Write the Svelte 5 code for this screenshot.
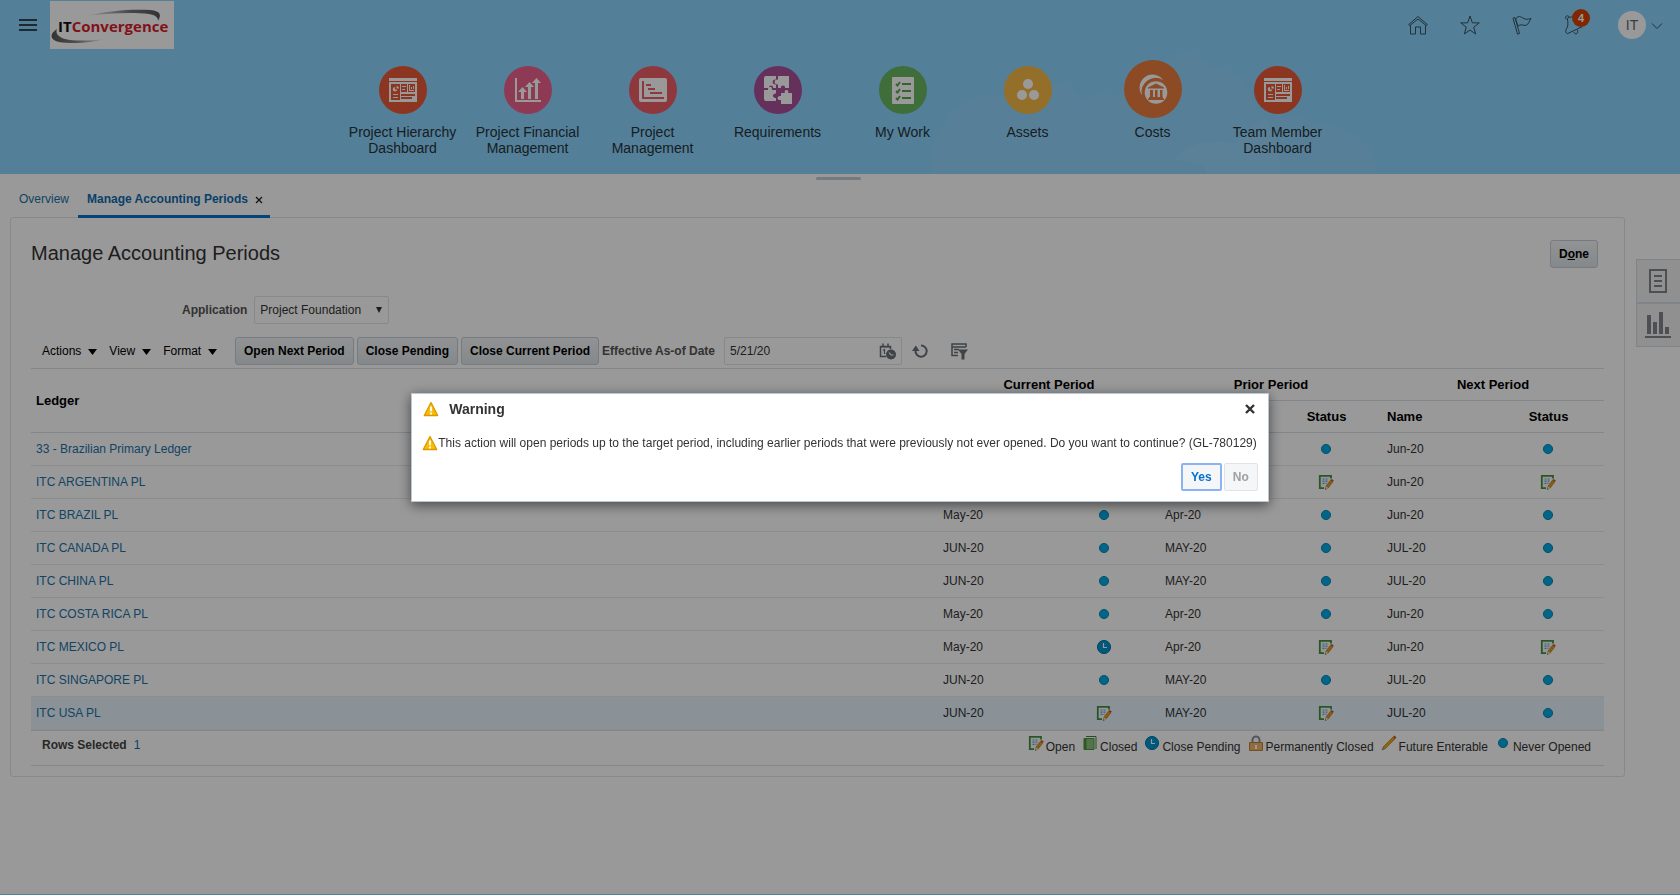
<script>
  const springboard = [
    { label: 'Project Hierarchy Dashboard', color: '#e95a39', icon: 'dashboard' },
    { label: 'Project Financial Management', color: '#ed618e', icon: 'growth' },
    { label: 'Project Management', color: '#ed5d66', icon: 'gantt' },
    { label: 'Requirements', color: '#aa509b', icon: 'puzzle' },
    { label: 'My Work', color: '#69b762', icon: 'checklist' },
    { label: 'Assets', color: '#f7b946', icon: 'assets' },
    { label: 'Costs', color: '#e97d3e', icon: 'costs', active: true },
    { label: 'Team Member Dashboard', color: '#e95a39', icon: 'dashboard' }
  ];

  const ledgers = [
    { name: '33 - Brazilian Primary Ledger', periods: [['', ''], ['', 'never'], ['Jun-20', 'never']] },
    { name: 'ITC ARGENTINA PL', periods: [['', ''], ['', 'open'], ['Jun-20', 'open']] },
    { name: 'ITC BRAZIL PL', periods: [['May-20', 'never'], ['Apr-20', 'never'], ['Jun-20', 'never']] },
    { name: 'ITC CANADA PL', periods: [['JUN-20', 'never'], ['MAY-20', 'never'], ['JUL-20', 'never']] },
    { name: 'ITC CHINA PL', periods: [['JUN-20', 'never'], ['MAY-20', 'never'], ['JUL-20', 'never']] },
    { name: 'ITC COSTA RICA PL', periods: [['May-20', 'never'], ['Apr-20', 'never'], ['Jun-20', 'never']] },
    { name: 'ITC MEXICO PL', periods: [['May-20', 'pending'], ['Apr-20', 'open'], ['Jun-20', 'open']] },
    { name: 'ITC SINGAPORE PL', periods: [['JUN-20', 'never'], ['MAY-20', 'never'], ['JUL-20', 'never']] },
    { name: 'ITC USA PL', selected: true, periods: [['JUN-20', 'open'], ['MAY-20', 'open'], ['JUL-20', 'never']] }
  ];

  const legend = [
    ['open', 'Open'],
    ['closed', 'Closed'],
    ['pending', 'Close Pending'],
    ['locked', 'Permanently Closed'],
    ['future', 'Future Enterable'],
    ['never', 'Never Opened']
  ];

  let effectiveDate = $state('5/21/20');
  let dialogOpen = $state(true);
</script>

{#snippet status(kind)}
  <svg class="status" viewBox="0 0 16 16" width="16" height="16" aria-hidden="true">
    {#if kind === 'never'}
      <circle cx="8" cy="8" r="4.6" fill="#00a8e0" stroke="#087fab" stroke-width=".9" />
    {:else if kind === 'pending'}
      <circle cx="8" cy="8" r="6.6" fill="#0095cf" stroke="#0879a6" />
      <path d="M7.5 4v4.5H11" fill="none" stroke="#fff" stroke-width="1.2" />
    {:else if kind === 'open'}
      <path d="M1 1h12v10l-3 4H1z" fill="#f4f7fb" />
      <path d="M13 4.500V1.800H1.800v12.400H6" fill="none" stroke="#44913b" stroke-width="1.800" />
      <path d="M4.500 5h2m1 0h2m-5 2.200h2m1 0h2m-5 2.200h2m1 0h1" stroke="#6c9ed6" stroke-width="1.200" />
      <path d="M7.300 15.500l.8-3.400 4.600-6 2.200 1.700-4.600 6z" fill="#e59b13" stroke="#9c6b10" stroke-width=".6" />
      <path d="M12.600 6.100l1-1.200 2.200 1.600-1 1.300z" fill="#cf4740" />
      <path d="M7.200 15.700l.8-3.300 2.300 1.700z" fill="#eee" /><path d="M7.200 15.700l.3-1.500 1 .7z" fill="#555" />
    {:else if kind === 'closed'}
      <path d="M4 1.500h10V14" fill="none" stroke="#3f8239" />
      <path d="M2 3.500h10v11H2z" fill="#8dc47f" stroke="#4b9142" />
      <path d="M2 3h2.500v12H2z" fill="#4b9142" />
    {:else if kind === 'locked'}
      <path d="M4.500 8V5a3.500 3.500 0 0 1 7 0v3" fill="none" stroke="#8a9299" stroke-width="2" />
      <path d="M1.500 7.500h13v8h-13z" fill="#f1b56d" stroke="#c37f30" />
      <path d="M8 10v4" stroke="#fff" stroke-width="2" />
    {:else if kind === 'future'}
      <path d="M1 15l1.500-3.500L12 2l2 2-9.600 9.500z" fill="#e8a915" stroke="#b17710" stroke-width=".6" />
      <path d="M12 2l1.500-1.500 2 2L14 4z" fill="#d94a3e" />
      <path d="M.6 15.500l1.700-4 2.200 2.200z" fill="#999" />
    {/if}
  </svg>
{/snippet}

{#snippet tile(kind)}
  <svg viewBox="0 0 48 48" width="48" height="48" aria-hidden="true" fill="#fff">
    {#if kind === 'dashboard'}
      <path d="M10 12h28v3H10zM10 16h28v20H10z" />
      <g fill="#e95a39">
        <path d="M12 18h9v16h-9zM22 18h6v8h-6zM29 18h7v8h-7zM22 28h14v2H22zM22 31h11v2H22z" />
      </g>
      <path d="M16 21a2.300 2.300 0 1 0 2.300 2.500H16zM17.500 20v2.500H20a2.500 2.500 0 0 0-2.500-2.500zM14 28h5v1h-5zM14 31h5v1h-5zM23 20h4v1h-4zM23 23h3v1h-3zM30 19h1v5h4v1h-5zM32 21h1v2h-1zM34 20h1v3h-1z" />
    {:else if kind === 'growth'}
      <path d="M11 12h2v22h24v2H11z" />
      <path d="M17 33v-7h-3l4.500-5 4.500 5h-3v7zM24 33V21h-3l4.500-5 4.500 5h-3v12zM31 33V17h-3l4.500-5 4.500 5h-3v16z" />
    {:else if kind === 'gantt'}
      <rect x="10" y="12" width="28" height="24" rx="2" />
      <path fill="#ed5d66" d="M13 15h2v16h20v2H13zM17 18h5v2h-5zM19 22h7v2h-7zM21 26h12v2H21z" />
    {:else if kind === 'puzzle'}
      <path d="M12 10h10v3.500c-4.500-.5-4.500 5.500 0 5V22h-3c1-3.500-5-3.500-4 0h-5V12q0-2 2-2z" />
      <path d="M24 10h11v12h-4c1-3.500-5-3.500-4 0h-3v-3.500c-4.500.5-4.500-5.500 0-5z" />
      <path d="M10 24h4c-1-4.500 5-4.500 4 0h4v3.500c-4-.5-4 5 0 4.500v3H12q-2 0-2-2z" />
      <path d="M27 27h4c-2-4 5-4 3 0h4v11H27v-4c-4.500 1-4.500-5 0-4z" />
    {:else if kind === 'checklist'}
      <rect x="13" y="11" width="22" height="27" rx="1" />
      <path d="M17 18l1.500 1.500L21 16M23 18h9M17 25l1.500 1.500L21 23M23 25h9M17 32l1.500 1.500L21 30M23 32h9" fill="none" stroke="#58a551" stroke-width="2" />
    {:else if kind === 'assets'}
      <circle cx="24" cy="18" r="5" /><circle cx="18" cy="29" r="5" /><circle cx="30" cy="29" r="5" />
    {:else if kind === 'costs'}
      <path d="M13 30a12 12 0 0 1 21-15A14 14 0 0 0 13 30z" />
      <circle cx="27" cy="27.500" r="11.300" />
      <path fill="#e97d3e" d="M27 18.500l8 4v1H19v-1zM21 25h3v7h-3zM26 25h2.500v7H26zM31 25h2.500v7H31zM20 32h14v1.500h1V35H19v-1.500h1z" />
    {/if}
  </svg>
{/snippet}

{#snippet warn()}
  <svg class="warn" viewBox="0 0 16 16" width="16" height="16" aria-hidden="true">
    <path d="M8 1.500L14.700 14.500H1.300z" fill="#fbbc05" stroke="#d99a00" stroke-width="1.300" stroke-linejoin="round" />
    <path d="M8 5.500v4.800M8 11.500v2" stroke="#fff" stroke-width="1.800" />
  </svg>
{/snippet}

<div class="page">
  <header class="banner">
    <svg class="clouds" viewBox="0 0 1680 174" preserveAspectRatio="xMidYMax slice" aria-hidden="true">
      <path d="M932 174c-2-42 20-74 52-77 20-4 38 5 46 3 20-28 46-16 52 4 8-12 24-14 34-4 14-26 34-32 54-40 18-14 36-4 42 8 26 0 42 20 44 42 16 10 24 30 24 64z" />
      <path d="M1174 160c16-18 42-22 62-16 20-30 58-36 80-18 24-4 60 16 60 48H1207c0-10-14-14-33-14z" />
    </svg>
    <div class="global">
      <button class="bare menu" aria-label="Navigator">
        <svg viewBox="0 0 18 14" width="18" height="14"><path d="M0 2h18M0 7h18M0 12h18" stroke="#33454f" stroke-width="2" /></svg>
      </button>
      <a class="logo" href="#home" aria-label="ITConvergence">
        <svg viewBox="0 0 124 48" width="124" height="48">
          <defs>
            <linearGradient id="swoosh"><stop offset="0" stop-color="#fff" /><stop offset=".6" stop-color="#777" /><stop offset="1" stop-color="#555" /></linearGradient>
            <linearGradient id="swoosh2"><stop offset="0" stop-color="#555" /><stop offset=".5" stop-color="#888" /><stop offset="1" stop-color="#fff" /></linearGradient>
          </defs>
          <path d="M36 15C60 9 84 8 100 9c12 1 11 6 8 11 0-4-3-6-9-7-16-2-40-1-63 2z" fill="url(#swoosh)" />
          <path d="M7 28c-8 5-7 11 2 13 14 2 32 1 46-3-16 2-32 2-40 0-6-2-10-5-8-10z" fill="url(#swoosh2)" />
          <text x="8" y="31" class="brand"><tspan fill="#111">IT</tspan><tspan fill="#d81e2c">Convergence</tspan></text>
        </svg>
      </a>
      <nav class="tools" aria-label="Global">
        <button class="bare" aria-label="Home">
          <svg viewBox="0 0 20 20" width="20" height="20"><path d="M.7 9.500L10 1.500l9.300 8M.7 9.500l.9 1.200L10 4l8.400 6.700.9-1.200M2.500 10.500V19h5v-7h5v7h5v-8.500" /></svg>
        </button>
        <button class="bare" aria-label="Favorites">
          <svg viewBox="0 0 20 20" width="20" height="20"><path d="M10 1l2.300 6.800 7 .1-5.600 4.300 2 6.800L10 15l-5.700 4 2-6.800L.7 7.900l7-.1z" /></svg>
        </button>
        <button class="bare" aria-label="Watchlist">
          <svg viewBox="0 0 20 20" width="20" height="20"><path d="M1 3.200l2-.7 4.500 16-2 .7zM3.600 4C7-1 10 3 13 4c2.500.8 4 0 6-.7-1.500 2-2 6-5 7-2.800.6-5-2-8 1z" /></svg>
        </button>
        <button class="bare bell" aria-label="Notifications">
          <svg viewBox="0 0 20 20" width="20" height="20"><path d="M2.200 4.200a1.900 1.900 0 1 1 3-2M3.200 3.500C6 1.500 9 1.500 11 3M3.200 3.500C4.500 8 4 12 2.300 14c-1 2-.5 4 1 4.700l15-7M10 17c1 3.500 4.500 2 3.500-2" /></svg>
          <span class="count">4</span>
        </button>
        <button class="bare user" aria-label="Settings and Actions">
          <span class="avatar">IT</span>
          <svg viewBox="0 0 12 8" width="12" height="10"><path d="M1 2.500l5 5 5-5" /></svg>
        </button>
      </nav>
    </div>
    <nav class="springboard" aria-label="Springboard">
      {#each springboard as item}
        <a href="#{item.icon}">
          <span class="slot">
            <span class="disc" class:active={item.active} style:background={item.color}>{@render tile(item.icon)}</span>
          </span>
          <span class="caption">{item.label}</span>
        </a>
      {/each}
    </nav>
    <span class="grip"></span>
  </header>

  <div class="work">
    <main>
      <div class="tabs">
        <a class="tab" href="#overview">Overview</a>
        <div class="tab current">
          <a href="#periods">Manage Accounting Periods</a>
          <button class="bare" aria-label="Close tab">
            <svg viewBox="0 0 8 8" width="8" height="8"><path d="M1 1l6 6M7 1L1 7" stroke="#222" stroke-width="1.300" /></svg>
          </button>
        </div>
      </div>

      <section class="panel">
        <div class="heading">
          <h1>Manage Accounting Periods</h1>
          <button class="btn">D<u>o</u>ne</button>
        </div>

        <div class="field">
          <label for="application">Application</label>
          <div class="select">
            <select id="application"><option>Project Foundation</option></select>
            <svg viewBox="0 0 6 6" width="6" height="6" aria-hidden="true"><path d="M0 0h6L3 6z" fill="#333" /></svg>
          </div>
        </div>

        <div class="toolbar">
          <div class="menus">
            {#each ['Actions', 'View', 'Format'] as m}
              <button class="bare">{m}<svg viewBox="0 0 9 6" width="9" height="6"><path d="M0 0h9L4.500 6z" /></svg></button>
            {/each}
          </div>
          <div class="buttons">
            <button class="btn">Open Next Period</button>
            <button class="btn">Close Pending</button>
            <button class="btn">Close Current Period</button>
          </div>
          <label for="asof">Effective As-of Date</label>
          <div class="date">
            <input id="asof" type="text" bind:value={effectiveDate} />
            <button class="bare" aria-label="Select Date">
              <svg viewBox="0 0 17 17" width="17" height="17">
                <path d="M7 13.500H1.500V3.500h10V6M4 .5v3M9 .5v3" fill="none" stroke="#697077" stroke-width="1.500" />
                <path d="M1 3h11v1.500H1z" fill="#697077" />
                <path d="M4 7.500l1.500-1V11" fill="none" stroke="#697077" stroke-width="1.200" />
                <circle cx="12" cy="11.500" r="5" fill="#697077" /><path d="M10 9.500l2 2.500h2.500" fill="none" stroke="#fff" stroke-width="1.200" />
              </svg>
            </button>
          </div>
          <button class="bare refresh" aria-label="Refresh">
            <svg viewBox="0 0 16 16" width="16" height="16"><path d="M9 2.500a5.600 5.600 0 1 1-5.500 5" fill="none" stroke="#697077" stroke-width="2" /><path d="M3.800 2.500L7.500 8H0z" fill="#697077" /></svg>
          </button>
          <button class="bare filter" aria-label="Query By Example">
            <svg viewBox="0 0 17 17" width="17" height="17"><path d="M15 4V1H1v11.500h6M1 4h14M3 6.500h5M3 9.500h4" fill="none" stroke="#697077" stroke-width="1.500" /><path d="M7 6.500h10L13.500 11v5.500h-3V11z" fill="#697077" /></svg>
          </button>
        </div>

        <table>
          <colgroup>
            <col />
            <col class="narrow" /><col class="narrow" /><col class="narrow" />
            <col class="narrow" /><col class="narrow" /><col class="narrow" />
          </colgroup>
          <thead>
            <tr>
              <th rowspan="2" scope="col">Ledger</th>
              <th class="mid" colspan="2" scope="colgroup">Current Period</th>
              <th class="mid" colspan="2" scope="colgroup">Prior Period</th>
              <th class="mid" colspan="2" scope="colgroup">Next Period</th>
            </tr>
            <tr>
              <th></th>
              <th></th>
              <th></th>
              <th class="mid" scope="col">Status</th>
              <th scope="col">Name</th>
              <th class="mid" scope="col">Status</th>
            </tr>
          </thead>
          <tbody>
            {#each ledgers as row}
              <tr class:selected={row.selected}>
                <td><a href="#ledger">{row.name}</a></td>
                {#each row.periods as [period, state]}
                  <td>{period}</td>
                  <td class="mid">{@render status(state)}</td>
                {/each}
              </tr>
            {/each}
          </tbody>
        </table>

        <div class="summary">
          <div class="rows"><b>Rows Selected</b><span>1</span></div>
          <ul class="legend">
            {#each legend as [kind, text]}
              <li>{@render status(kind)}<span>{text}</span></li>
            {/each}
          </ul>
        </div>
      </section>
    </main>

    <aside>
      <button class="bare" aria-label="Reports">
        <svg viewBox="0 0 18 24" width="18" height="24"><path d="M1 1h16v22H1zM5 7h8M5 12h8M5 17h8" fill="none" stroke="#808589" stroke-width="2" /></svg>
      </button>
      <button class="bare" aria-label="Analytics">
        <svg viewBox="0 0 26 26" width="26" height="26"><path d="M2 3h4v19H2zM8 10h4v12H8zM14 0h4v22h-4zM20 15h4v7h-4zM0 24h26v2H0z" fill="#808589" /></svg>
      </button>
    </aside>
  </div>
</div>

{#if dialogOpen}
  <div class="glass">
    <div class="dialog" role="alertdialog" aria-labelledby="dlg-title" aria-describedby="dlg-text">
      <div class="dlg-head">
        {@render warn()}
        <h2 id="dlg-title">Warning</h2>
        <button class="bare" aria-label="Close" onclick={() => (dialogOpen = false)}>
          <svg viewBox="0 0 10 10" width="10" height="10"><path d="M1 1l8 8M9 1L1 9" stroke="#333" stroke-width="2.400" /></svg>
        </button>
      </div>
      <p id="dlg-text">{@render warn()}<span>This action will open periods up to the target period, including earlier periods that were previously not ever opened. Do you want to continue? (GL-780129)</span></p>
      <div class="dlg-foot">
        <button class="yes" onclick={() => (dialogOpen = false)}>Yes</button>
        <button class="no" onclick={() => (dialogOpen = false)}>No</button>
      </div>
    </div>
  </div>
{/if}

<style>
  :global(body) {
    background: #8cd4fd;
    font-family: 'Liberation Sans', Arial, sans-serif;
    font-size: 12px;
    line-height: 16px;
    color: #333;
  }
  *, *::before { box-sizing: border-box; }
  button, input, select { font: inherit; color: inherit; }
  a { color: #1c72a8; text-decoration: none; }
  svg { display: block; flex: none; }
  .bare { display: flex; align-items: center; padding: 0; border: 0; background: none; cursor: pointer; }

  .page {
    display: flex;
    flex-direction: column;
    min-height: 100vh;
    border-bottom: 1px solid #8cd4fd;
    background: #fff;
  }
  .banner { position: relative; height: 174px; background: #8cd4fd; }
  .clouds { position: absolute; inset: 0; width: 100%; height: 100%; fill: rgba(255, 255, 255, 0.06); }
  .global { position: relative; display: flex; align-items: center; height: 50px; padding: 0 17px 0 19px; }
  .menu { margin-right: 13px; }
  .logo { background: #fff; }
  .brand { font: 700 15px 'Open Sans', sans-serif; }
  .tools { display: flex; align-items: center; gap: 32px; margin-left: auto; }
  .tools svg { fill: none; stroke: #37525f; stroke-width: 1; }
  .bell { position: relative; }
  .count {
    position: absolute;
    left: 8px;
    top: -6px;
    width: 18px;
    height: 18px;
    border-radius: 50%;
    background: #d64000;
    color: #fff;
    font-size: 11px;
    font-weight: bold;
    line-height: 18px;
  }
  .user { gap: 5px; margin-left: 2px; }
  .avatar {
    width: 28px;
    height: 28px;
    border-radius: 50%;
    background: #fff;
    color: #666;
    font-size: 14px;
    line-height: 28px;
  }
  .springboard { position: relative; display: flex; justify-content: center; }
  .springboard a { display: flex; flex-direction: column; align-items: center; width: 125px; color: #263238; }
  .slot { display: grid; place-items: center; height: 80px; }
  .disc { display: grid; place-items: center; width: 48px; height: 48px; border-radius: 50%; }
  .disc.active { width: 58px; height: 58px; margin-bottom: 2px; }
  .caption { width: 110px; margin-top: -6px; text-align: center; font-size: 14px; }
  .grip {
    position: absolute;
    left: 50%;
    bottom: -6px;
    width: 45px;
    height: 3px;
    margin-left: -24px;
    border-radius: 2px;
    background: #c6ccd0;
  }

  .work { display: flex; gap: 11px; padding-left: 10px; }
  main { flex: 1; min-width: 0; }
  .tabs { position: relative; display: flex; height: 44px; }
  .tab { padding: 17px 9px 0; }
  .current { display: flex; gap: 7px; padding-right: 7px; border-bottom: 3px solid #0572ce; font-weight: bold; }
  .current a { color: #0f6cb0; }
  .current .bare { height: 18px; }
  .panel { margin-top: -1px; padding: 22px 20px 10px; border: 1px solid #dfe4e7; border-radius: 3px; }
  .heading { display: flex; justify-content: space-between; padding-right: 6px; }
  h1 { margin: 0; font-size: 20px; font-weight: normal; line-height: 26px; }
  .btn {
    height: 28px;
    padding: 0 8px;
    border: 1px solid #c4ced7;
    border-radius: 3px;
    background: linear-gradient(#f1f4f6, #dfe4e7);
    color: #000;
    font-weight: bold;
  }
  .field { display: flex; align-items: center; gap: 7px; margin-top: 28px; padding-left: 151px; }
  label { font-weight: bold; color: #555; }
  .select { display: grid; align-items: center; width: 135px; }
  .select > * { grid-area: 1 / 1; }
  .select svg { justify-self: end; margin-right: 7px; pointer-events: none; }
  select, .date { height: 28px; border: 1px solid #dfe4e7; border-radius: 2px; background: #fff; }
  select { appearance: none; padding: 0 5px; }
  .toolbar {
    display: flex;
    align-items: center;
    margin-top: 13px;
    padding: 0 11px 3px;
    border-bottom: 1px solid #d6dfe6;
  }
  .menus { display: flex; gap: 12px; width: 193px; }
  .menus .bare { gap: 7px; color: #000; }
  .menus svg { margin-top: 2px; }
  .buttons { display: flex; gap: 3px; margin-right: 3px; }
  .toolbar label { width: 122px; }
  .date { display: flex; align-items: center; width: 178px; padding: 0 5px; }
  .date input { flex: 1; min-width: 0; padding: 0; border: 0; outline: 0; background: none; }
  .refresh { margin-left: 10px; }
  .filter { margin-left: 23px; }

  table { width: 100%; table-layout: fixed; border-collapse: separate; border-spacing: 0; }
  .narrow { width: 111px; }
  th, td { padding: 0 5px; text-align: left; border-bottom: 1px solid #e6e9eb; }
  th { height: 32px; font-size: 13px; color: #000; border-color: #d6dfe6; }
  td { height: 33px; }
  .mid { text-align: center; }
  td .status { margin: 0 auto; }
  td.mid { padding-right: 6px; }
  .selected td { background: #e6f2fc; }
  .summary {
    display: flex;
    justify-content: space-between;
    height: 36px;
    padding: 0 13px 0 11px;
    border: solid #dcdfe1;
    border-width: 1px 0;
  }
  .rows { display: flex; gap: 7px; padding-top: 6px; }
  .rows b { color: #444; }
  .rows span { color: #0f6cb0; }
  .legend { display: flex; gap: 7px; margin: 0; padding: 4px 0 0; list-style: none; }
  .legend li { display: flex; gap: 2px; }
  .legend span { padding-top: 4px; }

  aside { width: 44px; padding-top: 85px; }
  aside .bare {
    justify-content: center;
    width: 44px;
    height: 44px;
    padding-right: 2px;
    border: 1px solid #d3dce2;
    border-right: 0;
    background: #f0f0f0;
  }

  .glass { position: fixed; inset: 0; display: grid; place-items: center; background: rgba(0, 0, 0, 0.4); }
  .dialog {
    padding: 7px 10px 10px;
    border: 1px solid #b9c8d3;
    background: #fff;
    box-shadow: 0 3px 12px rgba(0, 0, 0, 0.55);
  }
  .dlg-head { display: flex; align-items: center; padding: 0 3px 0 1px; }
  .dlg-head .bare { margin-left: auto; }
  h2 { margin: 0 0 0 10px; font-size: 14px; line-height: 16px; }
  p { display: flex; margin: 18px 0 12px; padding-right: 1px; }
  .dlg-foot { display: flex; justify-content: flex-end; gap: 2px; }
  .yes, .no { height: 28px; padding: 0 8px; border-radius: 2px; background: #f5f6f8; font-weight: bold; }
  .yes { border: 2px solid #8ab2f5; color: #0572ce; outline: 0; }
  .no { border: 1px solid #dfe4e7; color: #a0a0a0; }
</style>
